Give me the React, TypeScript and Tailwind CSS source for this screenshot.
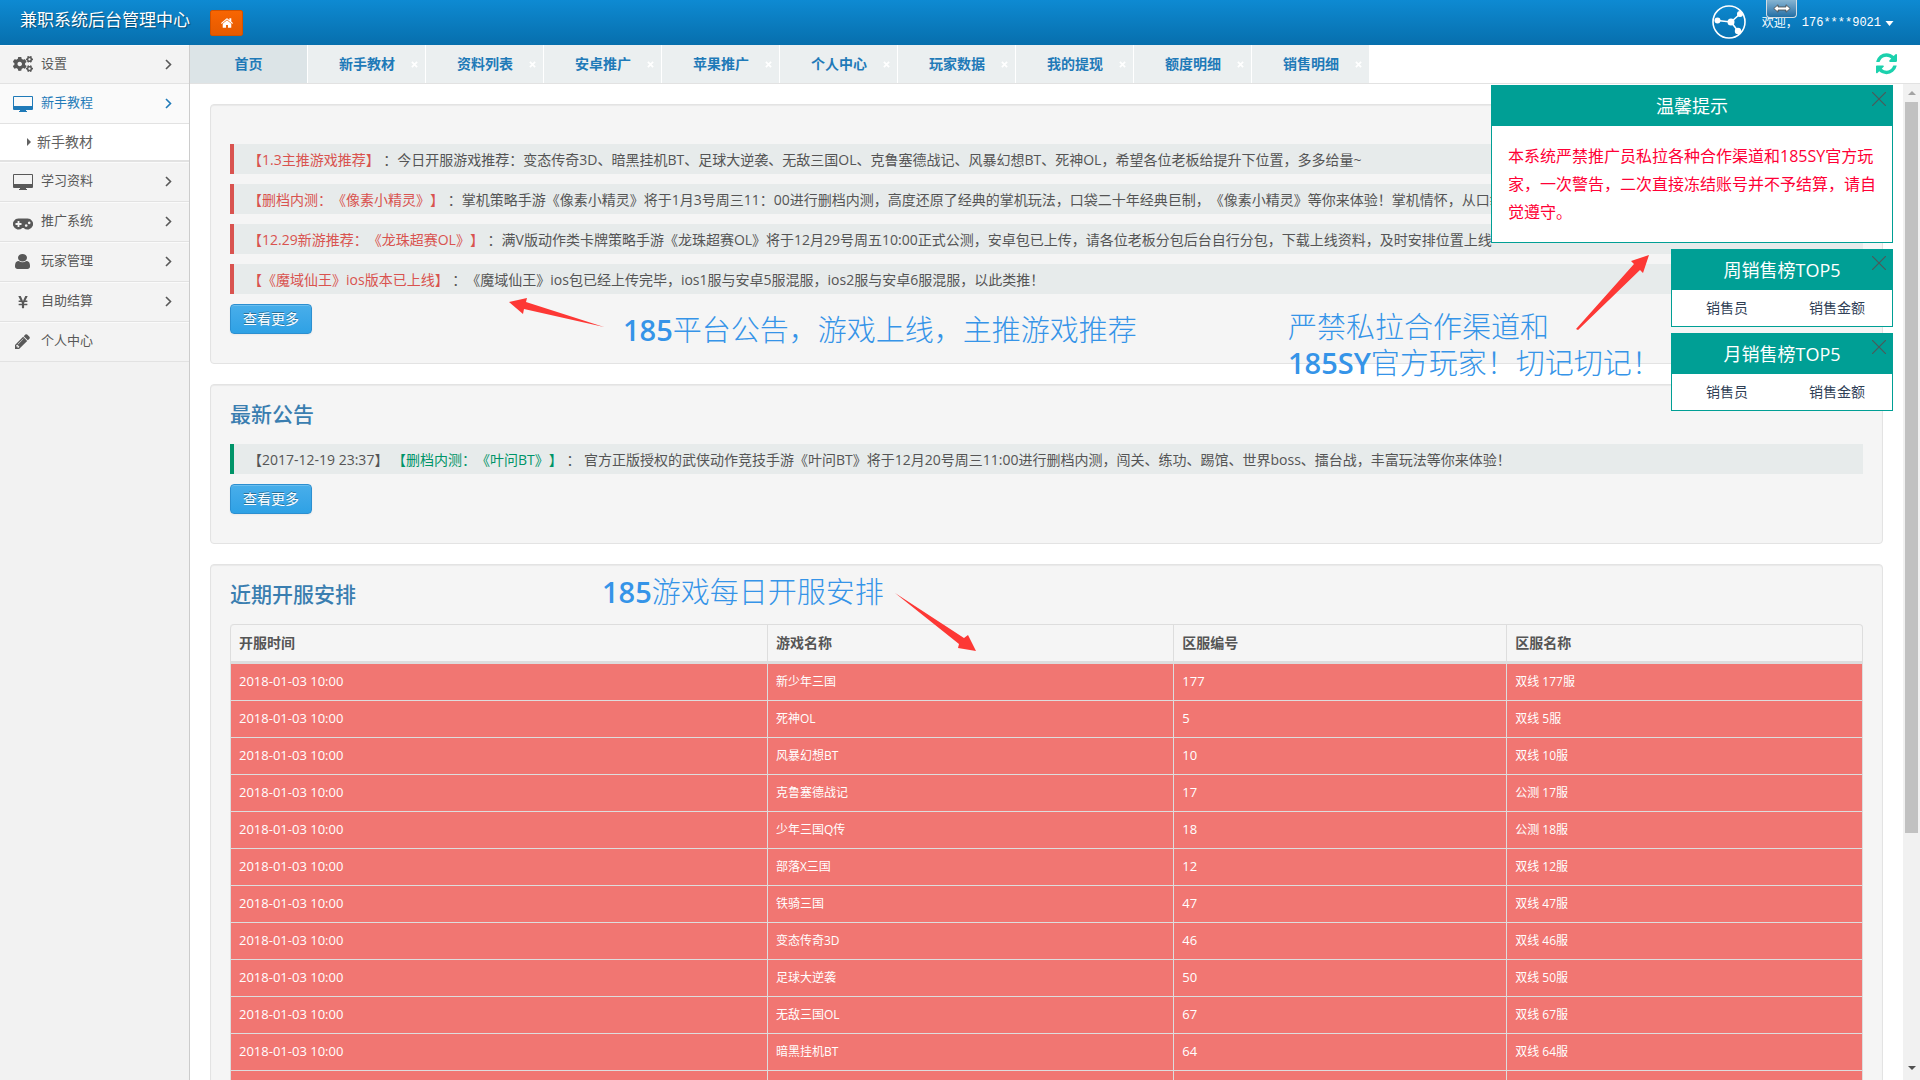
import React from "react";
import { FaCogs, FaYenSign } from "react-icons/fa";

const ui = "font-['Open_Sans','Noto_Sans_CJK_SC',sans-serif] [text-spacing-trim:space-all]";

function Desktop() {
  return (
    <svg viewBox="0 0 20 16" className="h-4 w-5" fill="currentColor">
      <path
        fillRule="evenodd"
        d="M1 0h18a1 1 0 0 1 1 1v12a1 1 0 0 1-1 1h-6v1h1v1H6v-1h1v-1H1a1 1 0 0 1-1-1V1a1 1 0 0 1 1-1zM1 1v9h18V1z"
      />
    </svg>
  );
}

function Gamepad() {
  return (
    <svg viewBox="0 0 20 12" className="mt-1 h-3 w-5" fill="currentColor">
      <path
        fillRule="evenodd"
        d="M5.500 .500h9a5.500 5.500 0 1 1-3.800 9.400H9.300A5.500 5.500 0 1 1 5.500.500zM4.600 3v2.100H2.500v1.800h2.100V9h1.800V6.900h2.100V5.100H6.400V3zM13.200 6.200a1.300 1.300 0 1 0 .01 0zM16.200 3.600a1.300 1.300 0 1 0 .01 0z"
      />
    </svg>
  );
}

function User() {
  return (
    <svg viewBox="256 128 1280 1536" className="h-[15px] w-[15px]" preserveAspectRatio="none" fill="currentColor">
      <path d="M1536 1399q0 109-62.500 187t-150.500 78h-854q-88 0-150.500-78t-62.500-187q0-85 8.500-160.500t31.500-152 58.500-131 94-89 134.500-34.500q131 128 313 128t313-128q76 0 134.500 34.500t94 89 58.500 131 31.500 152 8.500 160.500zm-256-887q0 159-112.500 271.500t-271.500 112.500-271.500-112.500-112.500-271.500 112.500-271.500 271.500-112.500 271.500 112.500 112.500 271.500z" />
    </svg>
  );
}

function Pencil() {
  return (
    <svg viewBox="128 128 1536 1536" className="h-[15px] w-[15px]" fill="currentColor">
      <path d="M491 1536l91-91-235-235-91 91v107h128v128h107zm523-928q0-22-22-22-10 0-17 7l-542 542q-7 7-7 17 0 22 22 22 10 0 17-7l542-542q7-7 7-17zm-54-192l416 416-832 832h-416v-416zm683 96q0 53-37 90l-166 166-416-416 166-165q36-38 90-38 53 0 91 38l235 234q37 39 37 91z" />
    </svg>
  );
}

function Home() {
  return (
    <svg viewBox="89 253 1614 1283" className="h-[10px] w-3" fill="currentColor">
      <path d="M1472 992v480q0 26-19 45t-45 19h-384v-384h-256v384h-384q-26 0-45-19t-19-45v-480q0-1 .5-3t.5-3l575-474 575 474q1 2 1 6zm223-69l-62 74q-8 9-21 11h-3q-13 0-21-7l-692-577-692 577q-12 8-24 7-13-2-21-11l-62-74q-8-10-7-23.500t11-21.500l719-599q32-26 76-26t76 26l244 204v-195q0-14 9-23t23-9h192q14 0 23 9t9 23v408l219 182q10 8 11 21.500t-7 23.500z" />
    </svg>
  );
}

function Refresh() {
  return (
    <svg viewBox="0 0 1536 1664" className="h-[23px] w-[21px]" fill="currentColor">
      <path d="M1511 928q0 5-1 7-64 268-268 434.500t-478 166.500q-146 0-282.500-55t-243.500-157l-129 129q-19 19-45 19t-45-19-19-45v-448q0-26 19-45t45-19h448q26 0 45 19t19 45-19 45l-137 137q71 66 161 102t187 36q134 0 250-65t186-179q11-17 53-117 8-23 30-23h192q13 0 22.500 9.500t9.500 22.500zm25-800v448q0 26-19 45t-45 19h-448q-26 0-45-19t-19-45 19-45l138-138q-148-137-349-137-134 0-250 65t-186 179q-11 17-53 117-8 23-30 23h-199q-13 0-22.500-9.500t-9.500-22.500v-7q65-268 270-434.500t480-166.500q146 0 284 55.500t245 156.500l130-129q19-19 45-19t45 19 19 45z" />
    </svg>
  );
}

function Chevron() {
  return (
    <svg viewBox="0 0 7 11" className="h-[11px] w-[7px]" fill="none" stroke="currentColor" strokeWidth="1.600">
      <path d="M1 1l4.500 4.500L1 10" />
    </svg>
  );
}

const menu = [
  { label: "设置", icon: <FaCogs className="size-5" /> },
  { label: "新手教程", icon: <Desktop />, open: true },
  { label: "学习资料", icon: <Desktop /> },
  { label: "推广系统", icon: <Gamepad /> },
  { label: "玩家管理", icon: <User /> },
  { label: "自助结算", icon: <FaYenSign className="size-[14px]" /> },
  { label: "个人中心", icon: <Pencil />, leaf: true },
];

const tabs = ["新手教材", "资料列表", "安卓推广", "苹果推广", "个人中心", "玩家数据", "我的提现", "额度明细", "销售明细"];

const notices = [
  ["【1.3主推游戏推荐】", "今日开服游戏推荐：变态传奇3D、暗黑挂机BT、足球大逆袭、无敌三国OL、克鲁塞德战记、风暴幻想BT、死神OL，希望各位老板给提升下位置，多多给量~"],
  ["【删档内测：《像素小精灵》】", "掌机策略手游《像素小精灵》将于1月3号周三11：00进行删档内测，高度还原了经典的掌机玩法，口袋二十年经典巨制，《像素小精灵》等你来体验！掌机情怀，从口袋开始"],
  ["【12.29新游推荐：《龙珠超赛OL》】", "满V版动作类卡牌策略手游《龙珠超赛OL》将于12月29号周五10:00正式公测，安卓包已上传，请各位老板分包后台自行分包，下载上线资料，及时安排位置上线"],
  ["【《魔域仙王》ios版本已上线】", "《魔域仙王》ios包已经上传完毕，ios1服与安卓5服混服，ios2服与安卓6服混服，以此类推！"],
];

const servers = [
  ["新少年三国", "177", "双线 177服"],
  ["死神OL", "5", "双线 5服"],
  ["风暴幻想BT", "10", "双线 10服"],
  ["克鲁塞德战记", "17", "公测 17服"],
  ["少年三国Q传", "18", "公测 18服"],
  ["部落X三国", "12", "双线 12服"],
  ["铁骑三国", "47", "双线 47服"],
  ["变态传奇3D", "46", "双线 46服"],
  ["足球大逆袭", "50", "双线 50服"],
  ["无敌三国OL", "67", "双线 67服"],
  ["暗黑挂机BT", "64", "双线 64服"],
];

function MoreButton() {
  return (
    <button className="h-[30px] self-start rounded border border-[#2c8fd0] bg-linear-to-b from-[#48aeea] to-[#2ea1e5] px-3 text-sm leading-none text-white shadow-[inset_0_1px_0_rgba(255,255,255,0.2),0_1px_2px_rgba(0,0,0,0.05)] [text-shadow:0_-1px_0_rgba(0,0,0,0.35)]">
      查看更多
    </button>
  );
}

function Panel({ title, children }: { title?: string; children: React.ReactNode }) {
  return (
    <section className="shrink-0 rounded border border-[#e3e3e3] bg-[#f5f5f5] px-[19px] shadow-[inset_0_1px_1px_rgba(0,0,0,0.05)]">
      {title && <h2 className="flex h-[59px] items-center text-[21px] font-medium text-[#3a7eb0]">{title}</h2>}
      {children}
    </section>
  );
}

function Popup({ title, className, children }: { title: string; className: string; children: React.ReactNode }) {
  return (
    <aside className={"border border-[#009f95] bg-white " + className}>
      <div className="relative flex h-10 items-center justify-center bg-[#009f95] text-lg text-white">
        {title}
        <button aria-label="关闭" className="absolute top-1.5 right-1.5 text-[#4b5a5a]">
          <svg viewBox="0 0 14 14" className="size-3.5" stroke="currentColor" strokeWidth="1.200">
            <path d="M0 0l14 14M14 0L0 14" />
          </svg>
        </button>
      </div>
      {children}
    </aside>
  );
}

function Ranking({ title }: { title: string }) {
  return (
    <Popup title={title} className="w-[222px]">
      <table className="w-full table-fixed text-sm text-[#2f4056]">
        <thead>
          <tr className="h-9">
            <th className="font-normal">销售员</th>
            <th className="font-normal">销售金额</th>
          </tr>
        </thead>
      </table>
    </Popup>
  );
}

export default function App() {
  return (
    <div lang="zh-CN" className={"relative flex h-screen flex-col overflow-hidden bg-white text-[#555] " + ui}>
      <header className="flex h-[45px] shrink-0 bg-linear-to-b from-[#0e8ad2] to-[#076fad] text-white">
        <h1 className="pt-2 pl-5 text-[17px] leading-6 [text-shadow:1px_1px_1px_rgba(0,0,0,0.4)]">兼职系统后台管理中心</h1>
        <button aria-label="主页" className="mt-2.5 ml-5 flex h-[26px] w-[33px] items-center justify-center rounded-xs border border-[#d25200] bg-linear-to-b from-[#f86502] to-[#e55a00]">
          <Home />
        </button>
        <div className="ml-auto flex pr-[26px]">
          <svg viewBox="0 0 34 34" className="mt-[5px] size-[34px]" fill="none" stroke="#fff">
            <circle cx="17" cy="17" r="16" strokeWidth="1.600" />
            <path d="M5.500 15.500L19 17M19 17L28 9M19 17L26 26" strokeWidth="1.600" />
            <g fill="#fff" stroke="none">
              <circle cx="5.500" cy="15.500" r="3" />
              <circle cx="19" cy="17" r="3.500" />
              <circle cx="28" cy="9" r="3" />
              <circle cx="26" cy="26" r="3.200" />
            </g>
          </svg>
          <button className="mt-3.5 ml-4 flex h-[18px] items-center text-xs">
            <span className="w-10 text-left">欢迎，</span>
            <span className="font-['Liberation_Mono',monospace]">176****9021</span>
            <svg viewBox="0 0 8 5" className="ml-1 h-[5px] w-[9px]" fill="currentColor">
              <path d="M0 0h8L4 5z" />
            </svg>
          </button>
        </div>
        <div className="absolute top-0 right-[123px] flex h-[18px] w-[31px] items-center justify-center rounded-b border border-t-0 border-[#d5dde2] bg-linear-to-b from-[#86b4d2] to-[#1f6fa5]">
          <svg viewBox="0 0 18 9" className="h-[9px] w-[18px]" fill="#fff" stroke="#444" strokeWidth=".8">
            <path d="M.8 4.500L5 .8V3h8V.8l4.200 3.700L13 8.200V6H5v2.200z" />
          </svg>
        </div>
      </header>

      <div className="flex min-h-0 flex-1">
        <nav className="w-[190px] shrink-0 border-r border-[#ccc] bg-[#f2f2f2] text-[13px]">
          {menu.map((m, i) => (
            <div key={m.label}>
              <a
                href="#"
                className={
                  "flex items-center border-b border-[#e2e2e2] pr-[17px] shadow-[inset_0_1px_0_#fafafa] " +
                  (i === 0 ? "h-[39px] " : "h-10 ") +
                  (m.open ? "bg-[#fafafa] text-[#1f7ab8]" : "bg-[#f3f3f3] text-[#585858]")
                }
              >
                <span className="flex w-[41px] justify-center pl-1">{m.icon}</span>
                <span className="flex-1 pb-px">{m.label}</span>
                {!m.leaf && <Chevron />}
              </a>
              {m.open && (
                <a href="#" className="flex h-[38px] items-center gap-1.5 border-b-2 border-[#e2e2e2] bg-white pl-[27px] text-sm text-[#616161]">
                  <svg viewBox="0 0 4 8" className="h-2 w-1" fill="currentColor">
                    <path d="M0 0l4 4-4 4z" />
                  </svg>
                  新手教材
                </a>
              )}
            </div>
          ))}
        </nav>

        <div className="flex min-w-0 flex-1 flex-col">
          <div className="flex h-[39px] shrink-0 border-b border-[#e2e2e2] text-sm font-bold text-[#1f7ab8]">
            <button className="w-[117px] bg-[#dce4e7]">首页</button>
            {tabs.map((t) => (
              <div key={t} className="flex w-[118px] items-center gap-4 border-l border-white bg-[#ebeff0] pl-[31px]">
                <button>{t}</button>
                <button aria-label={"关闭" + t} className="text-white">
                  <svg viewBox="0 0 8 8" className="size-[7px]" stroke="currentColor" strokeWidth="2">
                    <path d="M1 1l6 6M7 1L1 7" />
                  </svg>
                </button>
              </div>
            ))}
            <button aria-label="刷新" className="mr-[23px] ml-auto text-[#1bd1ad]">
              <Refresh />
            </button>
          </div>

          <div className="flex min-h-0 flex-1">
            <main className="flex min-w-0 flex-1 flex-col gap-5 overflow-hidden px-5 pt-5">
              <Panel>
                <div className="flex flex-col gap-2.5 pt-[39px] pb-[29px]">
                  {notices.map(([head, body]) => (
                    <p key={head} className="h-[30px] overflow-hidden border-l-4 border-[#d9534f] bg-[#e7ebeb] pl-3.5 text-sm leading-8 whitespace-nowrap">
                      <a href="#" className="text-[#d9534f]">{head}</a> ：{body}
                    </p>
                  ))}
                  <MoreButton />
                </div>
              </Panel>
              <Panel title="最新公告">
                <div className="flex flex-col gap-2.5 pb-[29px]">
                  <p className="h-[30px] overflow-hidden border-l-4 border-[#009468] bg-[#e7ebeb] pl-3.5 text-sm leading-8 whitespace-nowrap">
                    【2017-12-19 23:37】 <a href="#" className="text-[#009468]">【删档内测：《叶问BT》】</a> ： 官方正版授权的武侠动作竞技手游《叶问BT》将于12月20号周三11:00进行删档内测，闯关、练功、踢馆、世界boss、擂台战，丰富玩法等你来体验！
                  </p>
                  <MoreButton />
                </div>
              </Panel>
              <Panel title="近期开服安排">
                <table className="w-full table-fixed border-separate border-spacing-0 rounded-t border border-l-0 border-[#ddd] text-left">
                  <thead>
                    <tr className="h-[38px] text-sm text-[#555]">
                      <th className="w-[32.9%] rounded-tl border-b-2 border-l border-[#ddd] px-2 font-bold">开服时间</th>
                      <th className="w-[24.9%] border-b-2 border-l border-[#ddd] px-2 font-bold">游戏名称</th>
                      <th className="border-b-2 border-l border-[#ddd] px-2 font-bold">区服编号</th>
                      <th className="w-[21.8%] border-b-2 border-l border-[#ddd] px-2 font-bold">区服名称</th>
                    </tr>
                  </thead>
                  <tbody className="text-white">
                    {servers.map(([game, id, name]) => (
                      <tr key={game + id} className="h-[37px] bg-[#f17672] text-xs">
                        <td className="border-t border-l border-[#ddd] px-2 text-[13px]">2018-01-03 10:00</td>
                        <td className="border-t border-l border-[#ddd] px-2">{game}</td>
                        <td className="border-t border-l border-[#ddd] px-2 text-[13px]">{id}</td>
                        <td className="border-t border-l border-[#ddd] px-2">{name}</td>
                      </tr>
                    ))}
                    <tr className="h-[37px] bg-[#f17672]">
                      <td className="border-t border-l border-[#ddd]" />
                      <td className="border-t border-l border-[#ddd]" />
                      <td className="border-t border-l border-[#ddd]" />
                      <td className="border-t border-l border-[#ddd]" />
                    </tr>
                  </tbody>
                </table>
              </Panel>
            </main>
            <div className="flex w-[17px] shrink-0 flex-col items-center bg-[#f1f1f1]">
              <svg viewBox="0 0 8 4" className="my-[7px] h-1 w-2 shrink-0" fill="#a3a3a3">
                <path d="M0 4h8L4 0z" />
              </svg>
              <div className="h-[731px] w-[13px] bg-[#c1c1c1]" />
              <svg viewBox="0 0 8 4" className="mt-auto mb-2.5 h-1 w-2 shrink-0" fill="#505050">
                <path d="M0 0h8L4 4z" />
              </svg>
            </div>
          </div>
        </div>
      </div>

      <div className="pointer-events-none absolute inset-0 text-[29px] leading-9 font-light whitespace-nowrap text-[#3594e8]">
        <p className="absolute top-[312px] left-[623px]"><b className="font-semibold">185</b>平台公告，游戏上线，主推游戏推荐</p>
        <p className="absolute top-[309px] left-[1288px]">严禁私拉合作渠道和<br /><b className="font-semibold">185SY</b>官方玩家！切记切记！</p>
        <p className="absolute top-[574px] left-[602px]"><b className="font-semibold">185</b>游戏每日开服安排</p>
        <svg className="absolute top-0 left-0 h-[700px] w-[1700px]" viewBox="0 0 1700 700" fill="#fd3835">
          <path d="M509 302l18-4-1 4 78 25-80-18-1 5z" />
          <path d="M1649 255l-6 18-3-3-62 60-2-1 58-65-3-3z" />
          <path d="M976 651l-18-3 1-4-64-51 69 45 4-3z" />
        </svg>
      </div>

      <div className="absolute top-[85px] right-[27px] flex flex-col items-end gap-1.5">
        <Popup title="温馨提示" className="w-[402px]">
          <p className="px-4 pt-4 pb-4 text-base leading-7 text-[#ff0036]">
            本系统严禁推广员私拉各种合作渠道和185SY官方玩家，一次警告，二次直接冻结账号并不予结算，请自觉遵守。
          </p>
        </Popup>
        <Ranking title="周销售榜TOP5" />
        <Ranking title="月销售榜TOP5" />
      </div>
    </div>
  );
}
